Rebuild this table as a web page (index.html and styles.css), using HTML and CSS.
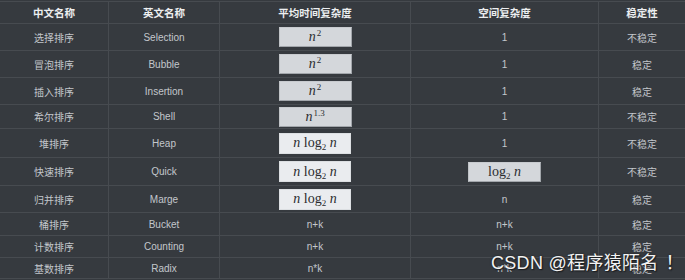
FILE: index.html
```html
<!DOCTYPE html>
<html lang="zh">
<head>
<meta charset="utf-8">
<link rel="stylesheet" href="styles.css">
</head>
<body>
<div class="page">
  <div class="table">
    <div class="row head h22">
      <div class="c">中文名称</div><div class="c">英文名称</div><div class="c">平均时间复杂度</div><div class="c">空间复杂度</div><div class="c">稳定性</div>
    </div>
    <div class="row h27">
      <div class="c">选择排序</div><div class="c">Selection</div>
      <div class="c"><span class="box gray"><span class="m"><i>n</i><sup>2</sup></span></span></div>
      <div class="c">1</div><div class="c">不稳定</div>
    </div>
    <div class="row h27">
      <div class="c">冒泡排序</div><div class="c">Bubble</div>
      <div class="c"><span class="box gray"><span class="m"><i>n</i><sup>2</sup></span></span></div>
      <div class="c">1</div><div class="c">稳定</div>
    </div>
    <div class="row h27">
      <div class="c">插入排序</div><div class="c">Insertion</div>
      <div class="c"><span class="box gray"><span class="m"><i>n</i><sup>2</sup></span></span></div>
      <div class="c">1</div><div class="c">稳定</div>
    </div>
    <div class="row h24">
      <div class="c">希尔排序</div><div class="c">Shell</div>
      <div class="c"><span class="box gray"><span class="m"><i>n</i><sup>1.3</sup></span></span></div>
      <div class="c">1</div><div class="c">不稳定</div>
    </div>
    <div class="row h29">
      <div class="c">堆排序</div><div class="c">Heap</div>
      <div class="c"><span class="box white"><span class="m"><i>n</i> log<sub>2</sub> <i>n</i></span></span></div>
      <div class="c">1</div><div class="c">不稳定</div>
    </div>
    <div class="row h28">
      <div class="c">快速排序</div><div class="c">Quick</div>
      <div class="c"><span class="box white"><span class="m"><i>n</i> log<sub>2</sub> <i>n</i></span></span></div>
      <div class="c"><span class="box gray"><span class="m">log<sub>2</sub> <i>n</i></span></span></div>
      <div class="c">不稳定</div>
    </div>
    <div class="row h27">
      <div class="c">归并排序</div><div class="c">Marge</div>
      <div class="c"><span class="box white"><span class="m"><i>n</i> log<sub>2</sub> <i>n</i></span></span></div>
      <div class="c">n</div><div class="c">稳定</div>
    </div>
    <div class="row h23">
      <div class="c">桶排序</div><div class="c">Bucket</div><div class="c">n+k</div><div class="c">n+k</div><div class="c">稳定</div>
    </div>
    <div class="row h22">
      <div class="c">计数排序</div><div class="c">Counting</div><div class="c">n+k</div><div class="c">n+k</div><div class="c">稳定</div>
    </div>
    <div class="row h21">
      <div class="c">基数排序</div><div class="c">Radix</div><div class="c">n*k</div><div class="c">n*k</div><div class="c">稳定</div>
    </div>
  </div>
  <div class="watermark">CSDN @程序猿陌名<span class="bang">！</span></div>
</div>
</body>
</html>
```
FILE: styles.css
```css
html, body {
  margin: 0;
  padding: 0;
  background: #383c41;
}
.page {
  position: relative;
  width: 685px;
  height: 280px;
  overflow: hidden;
  background: #363a3f;
}
.table {
  padding-top: 1px;
  font-family: "Liberation Sans", "Noto Sans CJK SC", sans-serif;
  font-size: 10px;
  color: #c3c7cc;
}
.row {
  display: grid;
  grid-template-columns: 109px 111px 191px 188px 86px;
  box-sizing: border-box;
  border-top: 1px solid #474b50;
}
.row:last-child {
  border-bottom: 1px solid #474b50;
}
.h22 { height: 22px; }
.h21 { height: 21px; }
.h23 { height: 23px; }
.h24 { height: 24px; }
.h27 { height: 27px; }
.h28 { height: 28px; }
.h29 { height: 29px; }
.row:last-child.h21 { height: 22px; }
.c {
  display: flex;
  align-items: center;
  justify-content: center;
  border-right: 1px solid #474b50;
  white-space: nowrap;
}
.c:last-child {
  border-right: none;
}
.head {
  font-weight: bold;
  color: #eceef0;
  font-size: 10.5px;
}
.box {
  display: flex;
  align-items: center;
  justify-content: center;
  box-sizing: border-box;
  width: 73px;
  height: 20px;
  color: #2a2c30;
}
.gray {
  background: #d4d7db;
  border: 1px solid #a2a6ab;
  border-top-color: #c8cbcf;
  border-left-color: #c0c3c7;
}
.white {
  width: 72px;
  height: 21px;
  background: #eaecef;
  border: 1px solid #dcdfe2;
}
.m {
  font-family: "Liberation Serif", "DejaVu Serif", serif;
  font-size: 14px;
  line-height: 1;
}
.m i {
  font-style: italic;
}
.m sup {
  font-size: 9px;
  vertical-align: 5px;
  line-height: 0;
  margin-left: 1px;
}
.m sub {
  font-size: 9px;
  vertical-align: -3px;
  line-height: 0;
}
.watermark {
  position: absolute;
  left: 491px;
  top: 248px;
  font-family: "Liberation Sans", "Noto Sans CJK SC", sans-serif;
  font-size: 18px;
  color: #f2f2f2;
  letter-spacing: 0.3px;
  text-shadow: 0 0 2px #1a1c1f, 1px 1px 1px #1a1c1f;
  white-space: nowrap;
}
.bang {
  margin-left: 7px;
}
```
